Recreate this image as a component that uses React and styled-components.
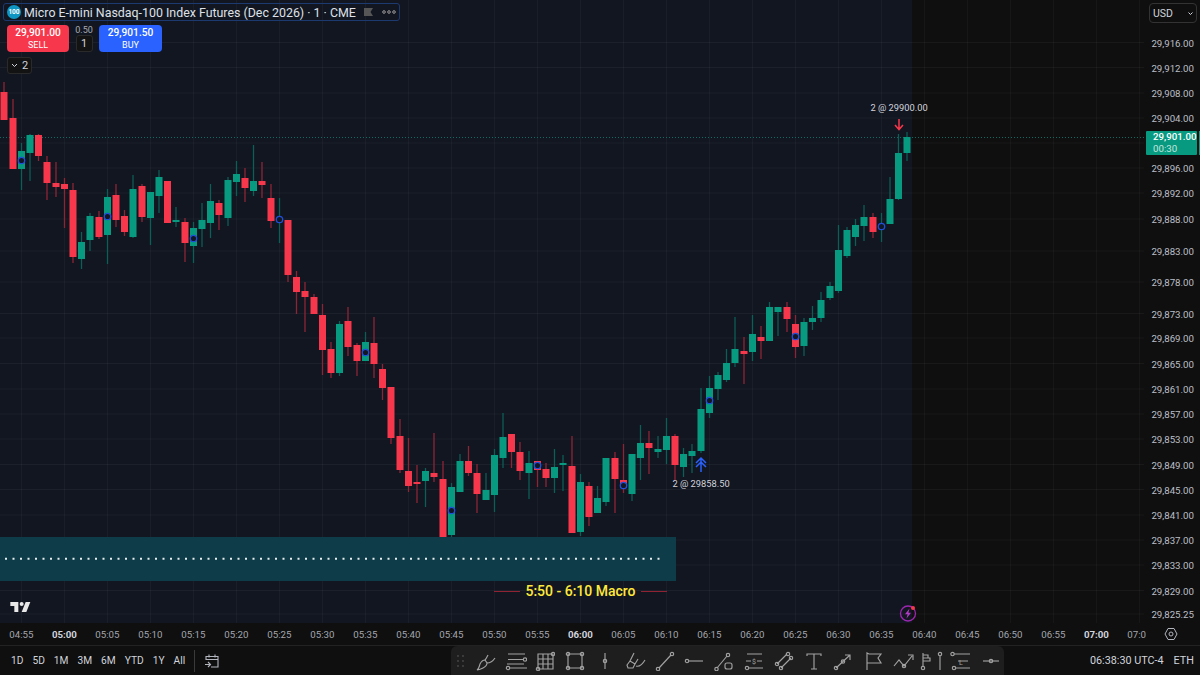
import React from 'react';
import styled, { createGlobalStyle } from 'styled-components';

const colors = {
  chart: '#121621',
  panel: '#0f0f0f',
  dock: '#1e1e1e',
  line: '#2a2a2a',
  text: '#d1d4dc',
  muted: '#bcbfc7',
  red: '#f7374b',
  green: '#089981',
  blue: '#2962ff',
};
const font = '"Roboto", "Liberation Sans", sans-serif';

const CHART_W = 1144;
const CHART_H = 623;
const FUTURE_X = 912;
const slot = i => 21.4 + i * 8.6;

// body top, body bottom, wick top, wick bottom, colour. first entry sits two minutes before 04:55
const candles = [
  [92, 120, 82, 120, 'r'], [118, 169, 99, 169, 'r'], [151, 169, 143, 190, 'g'], [135, 153, 134, 181, 'g'],
  [135, 156, 134, 161, 'r'], [162, 183, 156, 200, 'r'], [183, 187, 162, 197, 'r'], [184, 189, 178, 228, 'r'],
  [190, 257, 183, 263, 'r'], [242, 259, 232, 269, 'g'], [216, 240, 213, 251, 'g'], [217, 237, 211, 239, 'r'],
  [197, 235, 189, 264, 'g'], [195, 220, 184, 227, 'r'], [216, 232, 210, 236, 'r'], [189, 237, 175, 238, 'g'],
  [186, 217, 184, 222, 'r'], [192, 218, 192, 245, 'g'], [177, 196, 170, 213, 'g'], [181, 223, 181, 223, 'r'],
  [220, 222, 207, 227, 'g'], [222, 243, 218, 262, 'r'], [228, 246, 222, 263, 'g'], [220, 229, 203, 247, 'g'],
  [201, 223, 184, 238, 'g'], [203, 215, 200, 230, 'r'], [180, 218, 177, 226, 'g'], [174, 182, 161, 196, 'g'],
  [178, 188, 168, 202, 'r'], [181, 191, 145, 196, 'g'], [181, 185, 162, 198, 'r'], [198, 221, 184, 228, 'r'],
  [218, 220, 198, 243, 'g'], [220, 275, 220, 282, 'r'], [277, 292, 271, 314, 'r'], [291, 297, 282, 332, 'r'],
  [297, 314, 294, 314, 'r'], [315, 350, 304, 375, 'r'], [349, 373, 342, 378, 'r'], [324, 373, 321, 376, 'g'],
  [321, 347, 307, 356, 'r'], [345, 361, 343, 376, 'r'], [342, 361, 332, 361, 'g'], [343, 364, 317, 378, 'r'],
  [369, 388, 364, 400, 'r'], [387, 438, 387, 444, 'r'], [436, 470, 419, 473, 'r'], [471, 486, 438, 492, 'r'],
  [482, 484, 465, 503, 'r'], [471, 481, 468, 507, 'g'], [473, 477, 433, 482, 'r'], [479, 538, 461, 540, 'r'],
  [487, 535, 483, 548, 'g'], [461, 492, 454, 492, 'g'], [461, 473, 446, 476, 'r'], [473, 494, 464, 513, 'r'],
  [490, 500, 473, 500, 'g'], [455, 495, 449, 512, 'g'], [437, 458, 413, 468, 'g'], [434, 452, 434, 468, 'r'],
  [452, 471, 442, 480, 'r'], [463, 473, 451, 499, 'g'], [461, 470, 461, 487, 'r'], [469, 478, 463, 487, 'r'],
  [467, 478, 449, 493, 'g'], [463, 465, 455, 491, 'g'], [466, 533, 436, 533, 'r'], [482, 532, 474, 536, 'g'],
  [486, 517, 482, 526, 'r'], [498, 513, 486, 513, 'g'], [458, 502, 458, 506, 'g'], [458, 479, 452, 513, 'r'],
  [480, 488, 444, 493, 'r'], [454, 494, 454, 501, 'g'], [443, 458, 425, 480, 'g'], [443, 448, 431, 474, 'r'],
  [449, 452, 436, 458, 'g'], [436, 450, 418, 464, 'g'], [436, 465, 434, 480, 'r'], [454, 467, 448, 477, 'g'],
  [451, 456, 444, 473, 'g'], [409, 451, 388, 453, 'g'], [388, 413, 376, 418, 'g'], [375, 389, 372, 400, 'g'],
  [363, 380, 349, 382, 'g'], [349, 363, 317, 367, 'g'], [351, 354, 337, 384, 'r'], [334, 352, 315, 361, 'g'],
  [337, 341, 326, 359, 'r'], [307, 341, 302, 341, 'g'], [307, 312, 307, 336, 'g'], [307, 319, 302, 332, 'r'],
  [324, 347, 315, 358, 'r'], [322, 346, 318, 356, 'g'], [318, 322, 306, 330, 'g'], [300, 318, 292, 322, 'g'],
  [286, 298, 282, 300, 'g'], [250, 291, 225, 293, 'g'], [230, 256, 227, 258, 'g'], [225, 237, 219, 246, 'g'],
  [217, 226, 205, 241, 'g'], [217, 232, 213, 238, 'r'], [225, 227, 213, 242, 'g'], [199, 224, 177, 224, 'g'],
  [153, 199, 134, 200, 'g'], [137, 153, 132, 161, 'g'],
];

const markers = [
  [0, 160], [10, 216], [20, 238], [30, 219], [40, 352], [50, 510],
  [60, 465], [70, 485], [80, 400], [90, 336], [100, 226],
];

const prices = [
  ['29,916.00', 42.5], ['29,912.00', 67.5], ['29,908.00', 93], ['29,904.00', 118], ['', 143],
  ['29,896.00', 168], ['29,892.00', 193], ['29,888.00', 219], ['29,883.00', 251], ['29,878.00', 282],
  ['29,873.00', 313.5], ['29,869.00', 338], ['29,865.00', 363.5], ['29,861.00', 389], ['29,857.00', 414],
  ['29,853.00', 439], ['29,849.00', 464.5], ['29,845.00', 489.5], ['29,841.00', 515], ['29,837.00', 540],
  ['29,833.00', 565], ['29,829.00', 590.5], ['29,825.25', 614],
];

const times = [
  '04:55', '05:00', '05:05', '05:10', '05:15', '05:20', '05:25', '05:30', '05:35', '05:40', '05:45', '05:50',
  '05:55', '06:00', '06:05', '06:10', '06:15', '06:20', '06:25', '06:30', '06:35', '06:40', '06:45', '06:50',
  '06:55', '07:00', '07:05',
];

const GlobalStyle = createGlobalStyle`
  html, body {
    margin: 0;
    background: ${colors.panel};
    font-family: ${font};
    overflow: hidden;
  }
`;
const Page = styled.div`
  width: 1200px;
  height: 675px;
  display: flex;
  flex-direction: column;
  background: ${colors.panel};
  color: ${colors.text};
`;
const MainRow = styled.div`
  display: flex;
  height: ${CHART_H}px;
`;
const ChartPane = styled.div`
  position: relative;
  width: ${CHART_W}px;
  height: 100%;
  overflow: hidden;
`;
const ChartSvg = styled.svg`
  display: block;
`;
const Legend = styled.div`
  position: absolute;
  top: 3px;
  left: 3px;
`;
const TitleBar = styled.div`
  width: 397px;
  height: 18px;
  box-sizing: border-box;
  border: 1px solid #1d3a70;
  border-radius: 3px;
  display: flex;
  align-items: center;
  padding-left: 3px;
`;
const SymbolBadge = styled.span`
  width: 14px;
  height: 14px;
  border-radius: 50%;
  background: #0f95c2;
  color: #fff;
  font-size: 6.5px;
  font-weight: 700;
  display: flex;
  align-items: center;
  justify-content: center;
  margin-right: 3px;
`;
const Title = styled.span`
  font-size: 12.4px;
  color: #dfe1e8;
  white-space: nowrap;
  width: 340px;
`;
const TradeRow = styled.div`
  display: flex;
  align-items: flex-start;
  margin: 4px 0 0 4px;
`;
const TradeButton = styled.div`
  width: ${p => p.$w}px;
  height: 27px;
  border-radius: 4px;
  background: ${p => p.$bg};
  color: #fff;
  display: flex;
  flex-direction: column;
  align-items: center;
  justify-content: center;
  line-height: 12px;
`;
const TradePrice = styled.span`
  font-size: 10.2px;
  font-weight: 500;
`;
const TradeSide = styled.span`
  font-size: 9px;
`;
const QtyColumn = styled.div`
  width: 30px;
  display: flex;
  flex-direction: column;
  align-items: center;
`;
const Spread = styled.span`
  font-size: 9px;
  line-height: 10px;
  color: #a8abb3;
`;
const DarkChip = styled.div`
  box-sizing: border-box;
  height: 17px;
  border: 1px solid ${colors.line};
  border-radius: 3px;
  background: #131313;
  color: ${colors.text};
  font-size: 11px;
  display: flex;
  align-items: center;
  justify-content: center;
  gap: 4px;
  width: ${p => p.$w}px;
`;
const CountRow = styled.div`
  margin: 5px 0 0 4px;
`;
const TradeNote = styled.span`
  position: absolute;
  transform: translate(-50%, -50%);
  font-size: 9.3px;
  color: #d1d4dc;
  white-space: nowrap;
`;
const MacroLabel = styled.div`
  position: absolute;
  left: 494px;
  top: 581px;
  width: 173px;
  height: 20px;
  display: flex;
  align-items: center;
  justify-content: space-between;
  color: #ffe93b;
  font-size: 14px;
  font-weight: 500;
  white-space: nowrap;
`;
const MacroRule = styled.i`
  width: 26px;
  height: 1px;
  background: #8f2233;
`;
const LogoMark = styled.svg`
  position: absolute;
  left: 9px;
  top: 600px;
`;
const AlertBadge = styled.svg`
  position: absolute;
  left: 898px;
  top: 604px;
`;
const PriceAxis = styled.div`
  position: relative;
  flex: 1;
  overflow: hidden;
`;
const CurrencyBox = styled.div`
  position: absolute;
  left: 5px;
  top: 3px;
  width: 48px;
  height: 20px;
  box-sizing: border-box;
  border: 1px solid #333;
  border-radius: 4px;
  font-size: 10.5px;
  color: #d1d4dc;
  display: flex;
  align-items: center;
  justify-content: space-between;
  padding: 0 2px 0 3px;
`;
const PriceTick = styled.span`
  position: absolute;
  right: 6px;
  transform: translateY(-50%);
  font-size: 9.7px;
  color: ${colors.muted};
`;
const LastPrice = styled.div`
  position: absolute;
  left: 2px;
  top: 131px;
  width: 51px;
  height: 24px;
  background: ${colors.green};
  border-radius: 1px;
  color: #fff;
  font-size: 9.7px;
  font-weight: 500;
  line-height: 12px;
  box-sizing: border-box;
  padding-left: 7px;
`;
const Countdown = styled.div`
  color: #c4e6df;
  font-weight: 400;
`;
const EdgeTab = styled.i`
  position: absolute;
  left: 55px;
  top: 131px;
  width: 1px;
  height: 24px;
  background: ${colors.green};
`;
const TimeRow = styled.div`
  display: flex;
  height: 22px;
`;
const TimeAxis = styled.div`
  position: relative;
  width: 1146px;
  overflow: hidden;
`;
const TimeTick = styled.span`
  position: absolute;
  top: 6px;
  transform: translateX(-50%);
  font-size: 9.7px;
  font-weight: ${p => (p.$major ? 700 : 400)};
  color: ${p => (p.$major ? '#d1d4dc' : '#a3a6ae')};
`;
const AxisCorner = styled.div`
  flex: 1;
  display: flex;
  align-items: center;
  justify-content: center;
  padding-right: 4px;
`;
const BottomBar = styled.div`
  display: flex;
  height: 29px;
  border-top: 1px solid #222;
`;
const RangeGroup = styled.div`
  width: 451px;
  display: flex;
  align-items: center;
  padding-left: 11px;
  box-sizing: border-box;
  gap: 9px;
`;
const RangeItem = styled.span`
  font-size: 10.2px;
  color: #d1d4dc;
`;
const Divider = styled.i`
  width: 1px;
  height: 22px;
  background: #3a3a3a;
`;
const ToolDock = styled.div`
  width: 553px;
  background: ${colors.dock};
  border-radius: 6px 6px 0 0;
  display: flex;
  align-items: center;
`;
const ToolSlot = styled.div`
  width: ${p => p.$w}px;
  flex: none;
  display: flex;
  justify-content: center;
`;
const Tool = styled.svg`
  display: block;
  fill: none;
  stroke: #a2a2a2;
  stroke-width: 1.15;
`;
const ToolText = styled.text`
  fill: #a2a2a2;
  stroke: none;
  font-family: ${font};
  font-size: 7px;
  text-anchor: middle;
`;
const SessionInfo = styled.div`
  flex: 1;
  display: flex;
  justify-content: flex-end;
  align-items: center;
  gap: 10px;
  padding-right: 6px;
  font-size: 10.8px;
  color: #d1d4dc;
`;

const Node = ({ x, y }) => <circle cx={x} cy={y} r="1.7" />;

const Candle = ({ i, data }) => {
  const [top, bottom, wickTop, wickBottom, side] = data;
  const x = Math.round(slot(i) * 2) / 2;
  const body = side === 'g' ? colors.green : colors.red;
  const wick = side === 'g' ? '#0c5f57' : '#8e2536';
  return (
    <g>
      <line x1={x} x2={x} y1={wickTop} y2={wickBottom} stroke={wick} strokeWidth="1.3" />
      <rect x={x - 3.5} y={top} width="7" height={bottom - top} fill={body} />
    </g>
  );
};

const Chart = () => (
  <ChartSvg width={CHART_W} height={CHART_H}>
    <rect width={FUTURE_X} height={CHART_H} fill={colors.chart} />
    <rect x={FUTURE_X} width={CHART_W - FUTURE_X} height={CHART_H} fill={colors.panel} />
    {prices.map(([, y]) => (
      <line key={y} x1="0" x2={CHART_W} y1={y} y2={y} stroke="#fff" strokeOpacity="0.045" />
    ))}
    {times.map((t, k) => (
      <line key={t} x1={21.4 + k * 43} x2={21.4 + k * 43} y1="0" y2={CHART_H} stroke="#fff" strokeOpacity="0.045" />
    ))}
    <line x1="0" x2={CHART_W} y1="137.5" y2="137.5" stroke="#0f6a61" strokeDasharray="1 2" />
    {candles.map((c, k) => (
      <Candle key={k} i={k - 2} data={c} />
    ))}
    {markers.map(([i, y]) => (
      <circle key={i} cx={Math.round(slot(i)) + 0.5} cy={y + 0.5} r="3.2" fill="#131722" stroke="#1f4fd8" strokeWidth="1.3" />
    ))}
    <rect y="537" width="676" height="44" fill="#0f3c49" />
    <line x1="5" x2="664" y1="558.7" y2="558.7" stroke="#e8eef0" strokeWidth="2" strokeDasharray="2 5.5" />
    <path d="M899 119v10M895 125l4 4.5 4-4.5" fill="none" stroke={colors.red} strokeWidth="1.5" />
    <path d="M701 472v-13M696 463l5-5 5 5M696 467l5-5 5 5" fill="none" stroke={colors.blue} strokeWidth="1.5" />
  </ChartSvg>
);

// [slot width, icon width, drawing]; the dock's slots are about 30px apart
const tools = [
  [20, 10, <g fill="#4a4a4a" stroke="none">{[5, 10, 15].flatMap(y => [2, 7].map(x => <circle key={x + y * 10} cx={x} cy={y} r="0.9" />))}</g>],
  [29.8, 22, <g><path d="M2 19c2-1 2-3 3-6 1-2 3-4 5-4l2 3c0 2-2 4-4 5-2 1-4 2-6 2z" /><path d="M10 9c1-1 2-3 3-5M12 12c3 0 6-2 8-5" /></g>],
  [29.8, 22, <g><path d="M3 3h17M3 8.5h15M5 17h17M2 13h17" /><Node x={20} y={8.5} /><Node x={3} y={17} /></g>],
  [29.8, 20, <g><path d="M3 3h15v15H3zM3 8h15M3 13h15M8 3v15M13 3v15" /><Node x={18} y={3} /><Node x={3} y={18} /></g>],
  [29.8, 20, <g><path d="M3 3h14v14H3z" /><Node x={3} y={3} /><Node x={17} y={3} /><Node x={3} y={17} /><Node x={17} y={17} /></g>],
  [29.8, 20, <g><path d="M10 2v16" /><Node x={10} y={10} /></g>],
  [29.8, 22, <g><path d="M10 2 6 10l5 3 3-5M6 10l-3 4 1 3h5l2-4M12 15c3 1 6-1 9-6" /></g>],
  [29.8, 20, <g><path d="M4 17 16 4" /><Node x={3} y={18} /><Node x={17} y={3} /></g>],
  [29.8, 20, <g><path d="M5 10h14" /><Node x={3} y={10} /></g>],
  [29.8, 20, <g><path d="M3 17 13 5" /><Node x={2.5} y={18} /><Node x={14} y={4} /><rect x="11" y="12" width="7" height="6" rx="2" /></g>],
  [29.8, 20, <g><path d="M3 3h15M2 10h5M13 10h5M5 17h14" /><Node x={3} y={17} /><ToolText x={10} y={13}>$</ToolText></g>],
  [29.8, 20, <g><path d="M3 13 13 3M7 17 17 7" /><Node x={14} y={3} /><Node x={3} y={13} /><Node x={7} y={17} /><Node x={17} y={7} /></g>],
  [29.8, 20, <path d="M3 5V3h14v2M10 3v15M7 18h6" />],
  [29.8, 20, <g><path d="M3 17 17 4M12 4h5v5" /><Node x={3} y={17} /><Node x={10} y={10.5} /></g>],
  [29.8, 20, <path d="M4 19V2l2 1h12l-3 4 3 5H4" />],
  [29.8, 22, <g><path d="M2 15l5-6 5 6 8-10M16 4h5v5" /><Node x={12} y={15} /></g>],
  [16, 14, <g><path d="M4 2v14M4 4h5v3H4M4 7h7v3H4M4 10h5" /><Node x={4} y={17} /></g>],
  [12, 10, <g><path d="M5 5v14" /><Node x={5} y={3} /></g>],
  [30, 22, <g><path d="M4 3h16M8 10h10M5 17h15" /><Node x={2.5} y={3} /><Node x={4} y={17} /><ToolText x={11} y={14}>L</ToolText></g>],
  [30, 20, <g><path d="M2 10h16" /><Node x={10} y={10} /></g>],
];

export default function App() {
  return (
    <Page>
      <GlobalStyle />
      <MainRow>
        <ChartPane>
          <Chart />
          <Legend>
            <TitleBar>
              <SymbolBadge>100</SymbolBadge>
              <Title>Micro E-mini Nasdaq-100 Index Futures (Dec 2026) · 1 · CME</Title>
              <svg width="9" height="8" viewBox="0 0 9 8"><path d="M0 0h9L6.5 4 9 8H0z" fill="#565656" /></svg>
              <svg width="16" height="4" viewBox="0 0 16 4" style={{ marginLeft: 9 }}>
                {[2, 7, 12].map(x => <circle key={x} cx={x} cy="2" r="1.3" fill="none" stroke="#9a9a9a" />)}
              </svg>
            </TitleBar>
            <TradeRow>
              <TradeButton $w={62} $bg={colors.red}>
                <TradePrice>29,901.00</TradePrice>
                <TradeSide>SELL</TradeSide>
              </TradeButton>
              <QtyColumn>
                <Spread>0.50</Spread>
                <DarkChip $w={17}>1</DarkChip>
              </QtyColumn>
              <TradeButton $w={63} $bg={colors.blue}>
                <TradePrice>29,901.50</TradePrice>
                <TradeSide>BUY</TradeSide>
              </TradeButton>
            </TradeRow>
            <CountRow>
              <DarkChip $w={25}>
                <svg width="7" height="5" viewBox="0 0 7 5"><path d="M1 1l2.5 2.5L6 1" fill="none" stroke="#d1d4dc" /></svg>
                2
              </DarkChip>
            </CountRow>
          </Legend>
          <TradeNote style={{ left: 899, top: 107 }}>2 @ 29900.00</TradeNote>
          <TradeNote style={{ left: 701, top: 483 }}>2 @ 29858.50</TradeNote>
          <MacroLabel>
            <MacroRule />
            5:50 - 6:10 Macro
            <MacroRule />
          </MacroLabel>
          <LogoMark width="24" height="14" viewBox="0 4 36 19">
            <path fill="#e8e8e8" d="M14 6H2v6h6v9h6V6zm12 15h-7l6-15h7l-6 15zm-7-9a3 3 0 1 0 0-6 3 3 0 0 0 0 6z" />
          </LogoMark>
          <AlertBadge width="20" height="18" viewBox="0 0 20 18">
            <circle cx="10" cy="9.5" r="7.5" fill="none" stroke="#9c27b0" strokeWidth="1.3" />
            <path d="M11.5 4.5 7 10.2h2.6L8.5 14.5 13 8.7h-2.6z" fill="#b13bc6" />
            <circle cx="15" cy="4" r="2" fill={colors.red} />
          </AlertBadge>
        </ChartPane>
        <PriceAxis>
          <CurrencyBox>
            USD
            <svg width="7" height="5" viewBox="0 0 7 5"><path d="M1.5 1.5l2 2 2-2" fill="none" stroke="#d1d4dc" /></svg>
          </CurrencyBox>
          {prices.filter(([label]) => label).map(([label, y]) => (
            <PriceTick key={label} style={{ top: y }}>{label}</PriceTick>
          ))}
          <LastPrice>
            29,901.00
            <Countdown>00:30</Countdown>
          </LastPrice>
          <EdgeTab />
        </PriceAxis>
      </MainRow>
      <TimeRow>
        <TimeAxis>
          {times.map((t, k) => (
            <TimeTick key={t} $major={t.endsWith(':00')} style={{ left: 21.4 + k * 43 }}>{t}</TimeTick>
          ))}
        </TimeAxis>
        <AxisCorner>
          <svg width="14" height="14" viewBox="0 0 14 14">
            <path d="M4 1.5h6L13 7l-3 5.5H4L1 7z" fill="none" stroke="#b2b5be" />
            <circle cx="7" cy="7" r="2" fill="none" stroke="#b2b5be" />
          </svg>
        </AxisCorner>
      </TimeRow>
      <BottomBar>
        <RangeGroup>
          {['1D', '5D', '1M', '3M', '6M', 'YTD', '1Y', 'All'].map(r => (
            <RangeItem key={r}>{r}</RangeItem>
          ))}
          <Divider />
          <svg width="16" height="16" viewBox="0 0 16 16" fill="none" stroke="#b2b5be" strokeWidth="1.1">
            <path d="M2 7V3.5h12V14H7M2 6.5h12M5 1.5v3M11 1.5v3M1 11.5h5M4 9l2.5 2.5L4 14" />
          </svg>
        </RangeGroup>
        <ToolDock>
          {tools.map(([width, w, shape], k) => (
            <ToolSlot key={k} $w={width}>
              <Tool width={w} height="20" viewBox={`0 0 ${w} 20`}>{shape}</Tool>
            </ToolSlot>
          ))}
        </ToolDock>
        <SessionInfo>
          <span>06:38:30 UTC-4</span>
          <span>ETH</span>
        </SessionInfo>
      </BottomBar>
    </Page>
  );
}
